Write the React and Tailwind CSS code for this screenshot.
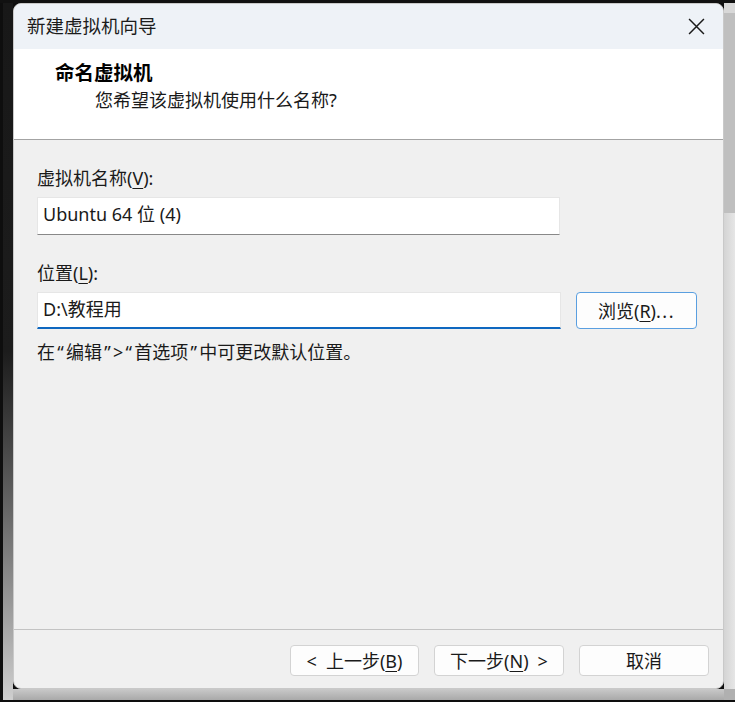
import React from "react";

const F = { fontFamily: '"Noto Sans", "Noto Sans CJK SC", sans-serif' };

function U({ children }) {
  return <span className="underline decoration-1 underline-offset-[3px]">{children}</span>;
}

function Q({ children }) {
  return <span className="inline-block w-[11px] text-center">{children}</span>;
}

function Btn({ children, w }) {
  return (
    <div
      className={`h-[31px] ${w} flex items-center justify-center rounded-[4px] border border-[#d3d3d3] bg-[#fdfdfd] text-[18px] leading-none text-[#1a1a1a]`}
    >
      {children}
    </div>
  );
}

export default function App() {
  return (
    <div style={F} className="w-[735px] h-[702px] bg-[#0e0e0e] flex flex-col overflow-hidden">
      <div className="h-[3px] shrink-0 bg-[#111]" />
      <div className="flex h-[697px] shrink-0">
        <div className="w-[3px] bg-[#0e0e0e]" />
        <div className="w-[10px] bg-gradient-to-b from-[#181818] via-[#1c1c1c] to-[#cfcfcf]" />
        <div className="flex flex-col w-[711px]">
          {/* window */}
          <div className="h-[686px] flex flex-col rounded-[8px] overflow-hidden border border-[#c9c9c9] bg-[#f0f0f0] text-[#1a1a1a]">
            {/* title bar */}
            <div className="h-[45px] shrink-0 bg-[#eef2f7] flex items-center justify-between pl-[13px] pr-[18px]">
              <span className="text-[18.5px] leading-none text-[#1c1c1c]">新建虚拟机向导</span>
              <svg width="17" height="17" viewBox="0 0 16 16" fill="none">
                <path d="M1 1 L15 15 M15 1 L1 15" stroke="#1a1a1a" strokeWidth="1.4" />
              </svg>
            </div>
            {/* header */}
            <div className="h-[91px] shrink-0 bg-white border-b border-[#a3a3a3] pt-[11px]">
              <div className="pl-[41px] text-[19.5px] leading-[26px] font-bold text-black">命名虚拟机</div>
              <div className="pl-[81px] mt-[1px] text-[18px] leading-[26px] text-[#1a1a1a]">您希望该虚拟机使用什么名称?</div>
            </div>
            {/* content */}
            <div className="flex-1 px-[23px] pt-[25px] flex flex-col">
              <div className="text-[18px] leading-[26px]">
                虚拟机名称(<U>V</U>):
              </div>
              <div className="mt-[6px] w-[523px] h-[38px] bg-white border border-[#e6e6e6] border-b-[#888888] flex items-center pl-[5px] text-[18px] leading-none pb-[4px]">
                Ubuntu 64 位 (4)
              </div>
              <div className="mt-[25px] text-[18px] leading-[26px]">
                位置(<U>L</U>):
              </div>
              <div className="mt-[6px] flex items-center gap-[15px]">
                <div className="w-[524px] h-[37px] bg-white border border-[#e6e6e6] border-b-2 border-b-[#0f68c0] flex items-center pl-[5px] text-[18px] leading-none pb-[3px]">
                  D:\教程用
                </div>
                <div className="w-[121px] h-[37px] rounded-[4px] border border-[#5a9fe0] bg-[#fdfdfd] flex items-center justify-center text-[18px] leading-none">
                  浏览(<U>R</U>)<span className="tracking-[1.5px]">...</span>
                </div>
              </div>
              <div className="mt-[10px] text-[18px] leading-[26px]">
                在<Q>“</Q>编辑<Q>”</Q>&gt;<Q>“</Q>首选项<Q>”</Q>中可更改默认位置。
              </div>
            </div>
            {/* footer */}
            <div className="h-[59px] shrink-0 border-t border-[#c3c3c3] flex justify-end gap-[15px] pt-[15px] pr-[14px]">
              <Btn w="w-[129px]">
                &lt;<span className="w-[9px]" />上一步(<U>B</U>)
              </Btn>
              <Btn w="w-[130px]">
                下一步(<U>N</U>)<span className="w-[9px]" />&gt;
              </Btn>
              <Btn w="w-[130px]">取消</Btn>
            </div>
          </div>
          <div className="h-[11px] bg-gradient-to-b from-[#c9c9c9] to-[#a9a9a9]" />
        </div>
        <div className="w-[11px] flex flex-col">
          <div className="h-[10px] bg-[#d8d8d8]" />
          <div className="h-[200px] bg-[#bfbfbf]" />
          <div className="flex-1 bg-gradient-to-r from-[#d4d4d4] to-[#e6e6e6]" />
          <div className="h-[11px] bg-[#b0b0b0]" />
        </div>
      </div>
      <div className="flex-1 bg-[#0e0e0e]" />
    </div>
  );
}
